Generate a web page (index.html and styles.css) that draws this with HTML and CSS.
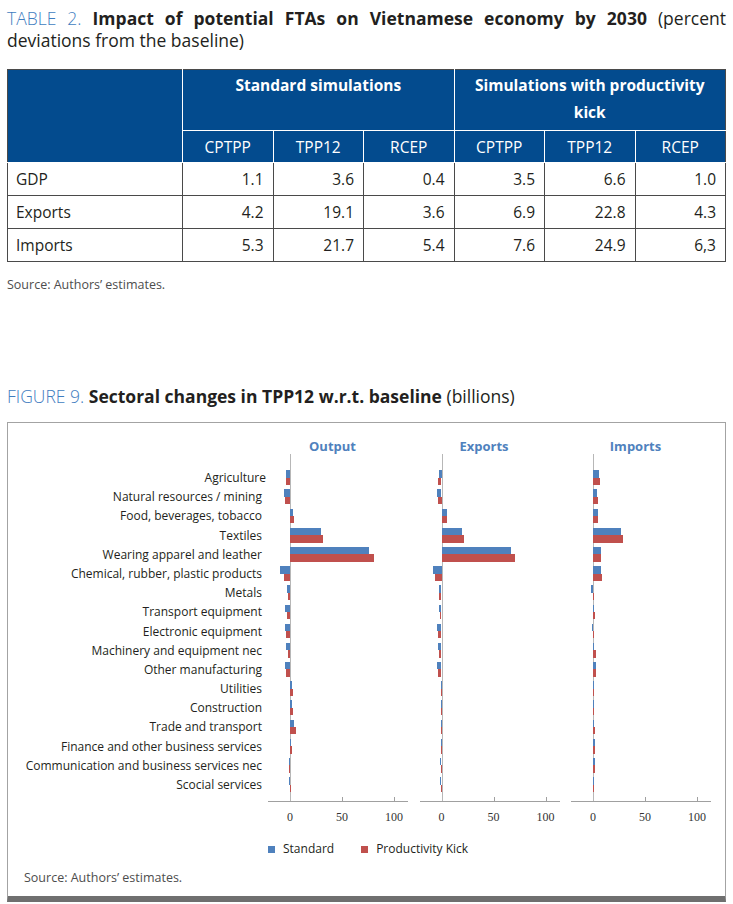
FILE: index.html
```html
<!DOCTYPE html>
<html lang="en">
<head>
<meta charset="utf-8">
<title>Impact of potential FTAs on Vietnamese economy by 2030</title>
<link rel="stylesheet" href="styles.css">
</head>
<body>
<div class="page">
  <p class="caption table-caption"><span class="cap-label">TABLE 2.</span> <b>Impact of potential FTAs on Vietnamese economy by 2030</b> (percent deviations from the baseline)</p>

  <table class="fta">
    <thead>
      <tr class="group-row">
        <th class="blank" rowspan="2"></th>
        <th colspan="3">Standard simulations</th>
        <th colspan="3">Simulations with productivity kick</th>
      </tr>
      <tr class="sub-row">
        <th>CPTPP</th><th>TPP12</th><th>RCEP</th><th>CPTPP</th><th>TPP12</th><th>RCEP</th>
      </tr>
    </thead>
    <tbody>
      <tr><td>GDP</td><td>1.1</td><td>3.6</td><td>0.4</td><td>3.5</td><td>6.6</td><td>1.0</td></tr>
      <tr><td>Exports</td><td>4.2</td><td>19.1</td><td>3.6</td><td>6.9</td><td>22.8</td><td>4.3</td></tr>
      <tr><td>Imports</td><td>5.3</td><td>21.7</td><td>5.4</td><td>7.6</td><td>24.9</td><td>6,3</td></tr>
    </tbody>
  </table>
  <p class="source">Source: Authors’ estimates.</p>

  <p class="caption fig-caption"><span class="cap-label">FIGURE 9.</span> <b>Sectoral changes in TPP12 w.r.t. baseline</b> (billions)</p>

  <div class="figure">
    <div class="chart">
      <ul class="labels">
        <li class="shift">Agriculture</li>
        <li>Natural resources / mining</li>
        <li>Food, beverages, tobacco</li>
        <li>Textiles</li>
        <li>Wearing apparel and leather</li>
        <li>Chemical, rubber, plastic products</li>
        <li>Metals</li>
        <li>Transport equipment</li>
        <li>Electronic equipment</li>
        <li>Machinery and equipment nec</li>
        <li>Other manufacturing</li>
        <li>Utilities</li>
        <li>Construction</li>
        <li>Trade and transport</li>
        <li>Finance and other business services</li>
        <li>Communication and business services nec</li>
        <li>Scocial services</li>
      </ul>

      <div class="panel">
        <div class="panel-title">Output</div>
        <div class="plot" id="plot-output"></div>
        <div class="axis"><div class="ticks"><span>0</span><span>50</span><span>100</span></div></div>
      </div>
      <div class="panel">
        <div class="panel-title">Exports</div>
        <div class="plot" id="plot-exports"></div>
        <div class="axis"><div class="ticks"><span>0</span><span>50</span><span>100</span></div></div>
      </div>
      <div class="panel">
        <div class="panel-title">Imports</div>
        <div class="plot" id="plot-imports"></div>
        <div class="axis"><div class="ticks"><span>0</span><span>50</span><span>100</span></div></div>
      </div>
    </div>

    <div class="legend">
      <span class="key"><i class="swatch std"></i>Standard</span>
      <span class="key"><i class="swatch kick"></i>Productivity Kick</span>
    </div>
    <p class="fig-source">Source: Authors’ estimates.</p>
  </div>
</div>
<script src="script.js"></script>
</body>
</html>
```

FILE: styles.css
```css
* { box-sizing: border-box; }

html, body {
  margin: 0;
  padding: 0;
  background: #ffffff;
}

body {
  font-family: "Open Sans", "Noto Sans", sans-serif;
  color: #231f20;
}

.page {
  width: 733px;
  padding: 7px 7px 0 7px;
}

.caption {
  margin: 0;
  font-size: 17.5px;
  line-height: 22px;
}

.table-caption {
  text-align: justify;
}

.caption b {
  font-weight: 700;
}

.cap-label {
  color: #3f7dbf;
  font-weight: 300;
}

/* ---------- table ---------- */
.fta {
  width: 719px;
  margin-top: 18px;
  border-collapse: collapse;
  table-layout: fixed;
  border: 1px solid #4a4a4a;
  font-size: 15.5px;
}

.fta th {
  background: #034b8e;
  color: #ffffff;
  border: 1px solid #ffffff;
  font-weight: 400;
  text-align: center;
  padding: 0 6px;
}

.fta thead tr:first-child th {
  border-top-color: #4a4a4a;
}

.fta th.blank {
  width: 175px;
  border-left-color: #4a4a4a;
}

.fta thead tr th:last-child {
  border-right-color: #4a4a4a;
}

.group-row th {
  font-weight: 700;
  vertical-align: top;
  height: 61px;
  line-height: 27px;
  padding-top: 2px;
}

.sub-row th {
  height: 32px;
  line-height: 20px;
}

.fta td {
  border: 1px solid #4a4a4a;
  height: 33px;
  padding: 0 9px 0 8px;
  text-align: right;
  line-height: 20px;
}

.fta td:first-child {
  text-align: left;
}

.source {
  margin: 14px 0 0;
  font-size: 12.5px;
  line-height: 18px;
  color: #4d4d4d;
}

.fig-caption {
  margin-top: 91px;
}

/* ---------- figure ---------- */
.figure {
  width: 719px;
  margin-top: 15px;
  border: 1px solid #a3a3a3;
  border-bottom: 6px solid #6f6f6f;
  padding: 16px 0 10px 0;
}

.chart {
  display: flex;
  align-items: flex-start;
}

.labels {
  list-style: none;
  margin: 0;
  padding: 29px 6px 0 0;
  width: 260px;
  font-size: 12px;
  color: #231f20;
  text-align: right;
}

.labels li {
  height: 19.2px;
  line-height: 19.2px;
  white-space: nowrap;
}

.labels li.shift {
  margin-right: -4px;
}

.panel {
  width: 140px;
  margin-right: 11.5px;
}

.panel-title {
  width: 129px;
  height: 15px;
  line-height: 15px;
  text-align: center;
  font-size: 13px;
  font-weight: 700;
  color: #4f81bd;
}

.plot {
  height: 347px;
  padding: 14px 0 6.6px;
  background-image:
    linear-gradient(#b7b7b7, #b7b7b7),
    linear-gradient(#a0a0a0, #a0a0a0),
    linear-gradient(#a0a0a0, #a0a0a0);
  background-size: 1px 100%, 1px 4px, 1px 4px;
  background-position: 22px 0, 74px 100%, 126px 100%;
  background-repeat: no-repeat;
}

.row {
  height: 19.2px;
  display: flex;
  flex-direction: column;
  justify-content: center;
}

.bar {
  height: 7.4px;
}

.bar.std { background: #4f81bd; }
.bar.kick { background: #c0504d; }

.axis {
  border-top: 1px solid #a0a0a0;
  padding-top: 7px;
}

.ticks {
  display: grid;
  grid-template-columns: repeat(3, 52px);
  margin-left: -4px;
  font-family: "Liberation Serif", "Times New Roman", serif;
  font-size: 12px;
  line-height: 16px;
  color: #333333;
  text-align: center;
}

.legend {
  display: flex;
  align-items: center;
  gap: 27px;
  margin: 16px 0 0 260px;
  font-size: 12px;
  line-height: 16px;
}

.key {
  display: flex;
  align-items: center;
}

.swatch {
  display: block;
  width: 7px;
  height: 7px;
  margin-right: 8px;
}

.swatch.std { background: #4f81bd; }
.swatch.kick { background: #c0504d; }

.fig-source {
  margin: 13px 0 0 16px;
  font-size: 12.5px;
  line-height: 16px;
  color: #4d4d4d;
}
```

FILE: script.js
```js
(function () {
  var data = {
    "plot-output": [
      [-4.3, -4.3], [-6.3, -5.3], [3, 3.7], [30.7, 33], [79, 84],
      [-10.3, -6], [-3.3, -2.3], [-4.7, -3.3], [-5.3, -4.3], [-3.7, -2.3],
      [-4.7, -3.7], [1.7, 3.3], [2, 3.3], [3.7, 6.3], [1, 2],
      [-1.3, -0.7], [-1, 1]
    ],
    "plot-exports": [
      [-3, -3.7], [-4.3, -4], [5, 5], [20.7, 22.3], [69.7, 73.7],
      [-9, -7], [-2.7, -2.3], [-2.7, -1.7], [-4.7, -3.7], [-3.7, -2.3],
      [-4.3, -3.7], [-0.7, -0.7], [-0.7, -0.7], [-1, -1], [-0.7, -0.7],
      [-1.3, -1], [-1.3, -1]
    ],
    "plot-imports": [
      [5.7, 6.7], [4.3, 4.7], [4.7, 5], [28.3, 30.3], [7.7, 8.3],
      [8, 9.3], [-1.7, 1], [1, 2], [-1, 1], [1.3, 2.7],
      [3, 3.3], [1, 1], [1, 1], [1, 1.5], [1.5, 1.5],
      [1.5, 1.5], [1, 1]
    ]
  };
  var ZERO = 22;

  function makeBar(v, cls) {
    var b = document.createElement("div");
    b.className = "bar " + cls;
    b.style.marginLeft = (ZERO + Math.min(0, v)) + "px";
    b.style.width = Math.abs(v) + "px";
    return b;
  }

  Object.keys(data).forEach(function (id) {
    var plot = document.getElementById(id);
    data[id].forEach(function (pair) {
      var row = document.createElement("div");
      row.className = "row";
      row.appendChild(makeBar(pair[0], "std"));
      row.appendChild(makeBar(pair[1], "kick"));
      plot.appendChild(row);
    });
  });
})();
```
